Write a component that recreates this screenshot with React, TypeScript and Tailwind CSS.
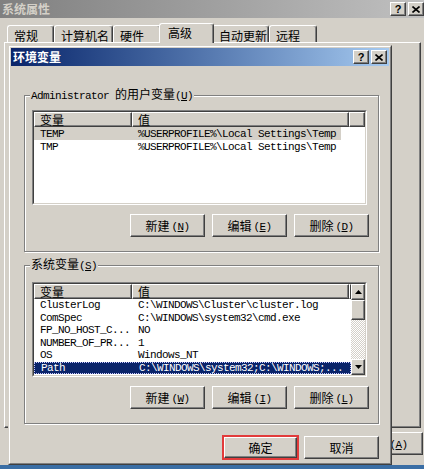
import React from 'react';

const mono = "font-['Liberation_Mono',monospace] text-[11px] tracking-[-0.6px]";
const raised =
  'border border-t-white border-l-white border-r-[#404040] border-b-[#404040] shadow-[inset_-1px_-1px_0_#808080]';

function Key({ k }: { k: string }) {
  return (
    <span className={mono}>
      (<span className="underline underline-offset-[1px]">{k}</span>)
    </span>
  );
}

function Button({ label, k, className = '' }: { label: string; k?: string; className?: string }) {
  return (
    <div className={`w-[75px] h-[23px] bg-[#d4d0c8] flex items-center justify-center ${raised} ${className}`}>
      <span>{label}</span>
      {k && (
        <span className="ml-[2px]">
          <Key k={k} />
        </span>
      )}
    </div>
  );
}

function CaptionButtons() {
  return (
    <div className="flex gap-[2px]">
      <div className={`w-[16px] h-[14px] bg-[#d4d0c8] flex items-center justify-center ${raised}`}>
        <span className="font-['Liberation_Sans',sans-serif] font-bold text-[11px] leading-none">?</span>
      </div>
      <div className={`w-[16px] h-[14px] bg-[#d4d0c8] flex items-center justify-center ${raised}`}>
        <svg width="8" height="7" viewBox="0 0 8 7">
          <path d="M0.5 0.5L7.5 6.5M7.5 0.5L0.5 6.5" stroke="#000" strokeWidth="1.6" />
        </svg>
      </div>
    </div>
  );
}

function Arrow({ up }: { up?: boolean }) {
  return (
    <div className={`h-[16px] bg-[#d4d0c8] flex items-center justify-center ${raised}`}>
      <svg width="7" height="4" viewBox="0 0 7 4">
        <path d={up ? 'M3.5 0L7 4H0Z' : 'M0 0H7L3.5 4Z'} fill="#000" />
      </svg>
    </div>
  );
}

function Header() {
  return (
    <div className="flex h-[15px] shrink-0">
      <div className={`w-[98px] bg-[#d4d0c8] pl-[5px] leading-[13px] ${raised}`}>变量</div>
      <div className={`w-[217px] bg-[#d4d0c8] pl-[5px] leading-[13px] ${raised}`}>值</div>
      <div className={`flex-1 bg-[#d4d0c8] ${raised}`} />
    </div>
  );
}

const userVars = [
  ['TEMP', '%USERPROFILE%\\Local Settings\\Temp'],
  ['TMP', '%USERPROFILE%\\Local Settings\\Temp'],
];

const sysVars = [
  ['ClusterLog', 'C:\\WINDOWS\\Cluster\\cluster.log'],
  ['ComSpec', 'C:\\WINDOWS\\system32\\cmd.exe'],
  ['FP_NO_HOST_C...', 'NO'],
  ['NUMBER_OF_PR...', '1'],
  ['OS', 'Windows_NT'],
  ['Path', 'C:\\WINDOWS\\system32;C:\\WINDOWS;...'],
];

const tabs = [
  { name: '常规', w: 'w-[47px]' },
  { name: '计算机名', w: 'w-[59px]' },
  { name: '硬件', w: 'w-[48px]' },
  { name: '高级', w: 'w-[55px]', on: true },
  { name: '自动更新', w: 'w-[57px]' },
  { name: '远程', w: 'w-[48px]' },
];

function Sunken({ children }: { children: React.ReactNode }) {
  return (
    <div className="ml-[7px] w-[335px] h-[95px] border border-t-[#808080] border-l-[#808080] border-r-white border-b-white">
      <div className="h-full border border-t-[#404040] border-l-[#404040] border-r-[#d4d0c8] border-b-[#d4d0c8] bg-white flex overflow-hidden">
        {children}
      </div>
    </div>
  );
}

export default function App() {
  return (
    <div className="w-[424px] h-[469px] overflow-hidden relative bg-[#3a6ea5] text-black font-['Noto_Sans_CJK_SC',sans-serif] text-[12px] leading-[14px]">
      {/* 系统属性 (inactive, behind) */}
      <div className="h-[465px] bg-[#d4d0c8] flex flex-col">
        <div className="h-[18px] bg-linear-to-r from-[#808080] to-[#c0c0c0] flex items-center pl-[2px]">
          <span className="flex-1 font-bold text-[#d4d0c8]">系统属性</span>
          <CaptionButtons />
        </div>
        <div className="h-[24px] flex items-end pl-[7px]">
          {tabs.map((t) =>
            t.on ? (
              <div
                key={t.name}
                className={`${t.w} -mx-[2px] h-[20px] -mb-[1px] relative z-10 bg-[#d4d0c8] rounded-t-[3px] border border-b-0 border-t-white border-l-white border-r-[#404040] shadow-[inset_-1px_0_0_#808080] pl-[8px] pt-[2px]`}
              >
                {t.name}
              </div>
            ) : (
              <div
                key={t.name}
                className={`${t.w} h-[17px] bg-[#d4d0c8] rounded-t-[3px] border border-b-0 border-t-white border-l-white border-r-[#404040] shadow-[inset_-1px_0_0_#808080] pl-[6px] pt-[3px]`}
              >
                {t.name}
              </div>
            )
          )}
        </div>
        <div className="ml-[4px] w-[417px] h-[386px] border border-t-white border-l-white border-r-[#404040] border-b-[#404040] shadow-[inset_-1px_-1px_0_#808080]" />
        <div className="mt-[4px] flex justify-end pr-[1px]">
          <Button label="应用" k="A" />
        </div>
      </div>

      {/* 环境变量 dialog */}
      <div className="absolute left-[8px] top-[45px] w-[384px] h-[420px] bg-[#d4d0c8] border border-t-[#d4d0c8] border-l-[#d4d0c8] border-r-[#404040] border-b-[#404040]">
        <div className="h-full border border-t-white border-l-white border-r-[#808080] border-b-[#808080] p-[1px] flex flex-col">
          <div className="h-[18px] shrink-0 bg-linear-to-r from-[#0a246a] to-[#a6caf0] flex items-center pl-[2px] pr-[2px]">
            <span className="flex-1 font-bold text-white">环境变量</span>
            <CaptionButtons />
          </div>

          <fieldset className="mt-[21px] ml-[13px] w-[355px] border border-[#808080] shadow-[1px_1px_0_#fff,inset_1px_1px_0_#fff] pb-[14px]">
            <legend className="ml-[5px] px-[1px] bg-[#d4d0c8] leading-[14px]">
              <span className={mono}>Administrator </span>的用户变量<Key k="U" />
            </legend>
            <div className="mt-[7px]">
              <Sunken>
                <div className="flex-1 flex flex-col">
                  <Header />
                  {userVars.map(([k, v], i) => (
                    <div
                      key={k}
                      className={`h-[13px] w-[307px] flex items-center whitespace-nowrap ${i === 0 ? 'bg-[#d4d0c8]' : ''}`}
                    >
                      <span className={`w-[98px] pl-[6px] ${mono}`}>{k}</span>
                      <span className={`pl-[6px] ${mono}`}>{v}</span>
                    </div>
                  ))}
                </div>
              </Sunken>
            </div>
            <div className="mt-[9px] flex justify-end gap-[7px] pr-[9px]">
              <Button label="新建" k="N" />
              <Button label="编辑" k="E" />
              <Button label="删除" k="D" />
            </div>
          </fieldset>

          <fieldset className="mt-[5px] ml-[13px] w-[355px] border border-[#808080] shadow-[1px_1px_0_#fff,inset_1px_1px_0_#fff] pb-[14px]">
            <legend className="ml-[5px] px-[1px] bg-[#d4d0c8] leading-[14px]">
              系统变量<Key k="S" />
            </legend>
            <div className="mt-[9px]">
              <Sunken>
                <div className="flex-1 flex flex-col">
                  <Header />
                  {sysVars.map(([k, v], i) => (
                    <div
                      key={k}
                      className={`h-[12.5px] shrink-0 flex items-center whitespace-nowrap overflow-hidden ${
                        i === 5 ? 'bg-[#0a246a] text-white border border-dotted border-[#c8c8ff]' : ''
                      }`}
                    >
                      <span className={`w-[98px] shrink-0 pl-[6px] ${mono}`}>{k}</span>
                      <span className={`pl-[6px] ${mono}`}>{v}</span>
                    </div>
                  ))}
                </div>
                <div className="w-[16px] flex flex-col">
                  <Arrow up />
                  <div className={`h-[20px] bg-[#d4d0c8] ${raised}`} />
                  <div className="flex-1 bg-[repeating-conic-gradient(#ffffff_0_25%,#d4d0c8_0_50%)] bg-[length:2px_2px]" />
                  <Arrow />
                </div>
              </Sunken>
            </div>
            <div className="mt-[9px] flex justify-end gap-[7px] pr-[9px]">
              <Button label="新建" k="W" />
              <Button label="编辑" k="I" />
              <Button label="删除" k="L" />
            </div>
          </fieldset>

          <div className="mt-[11px] flex justify-end items-center gap-[5px] pr-[10px]">
            <div className="w-[77px] h-[25px] border-2 border-[#e23b3b] flex">
              <div className={`flex-1 bg-[#d4d0c8] flex items-center justify-center ${raised}`}>确定</div>
            </div>
            <Button label="取消" />
          </div>
        </div>
      </div>
    </div>
  );
}
